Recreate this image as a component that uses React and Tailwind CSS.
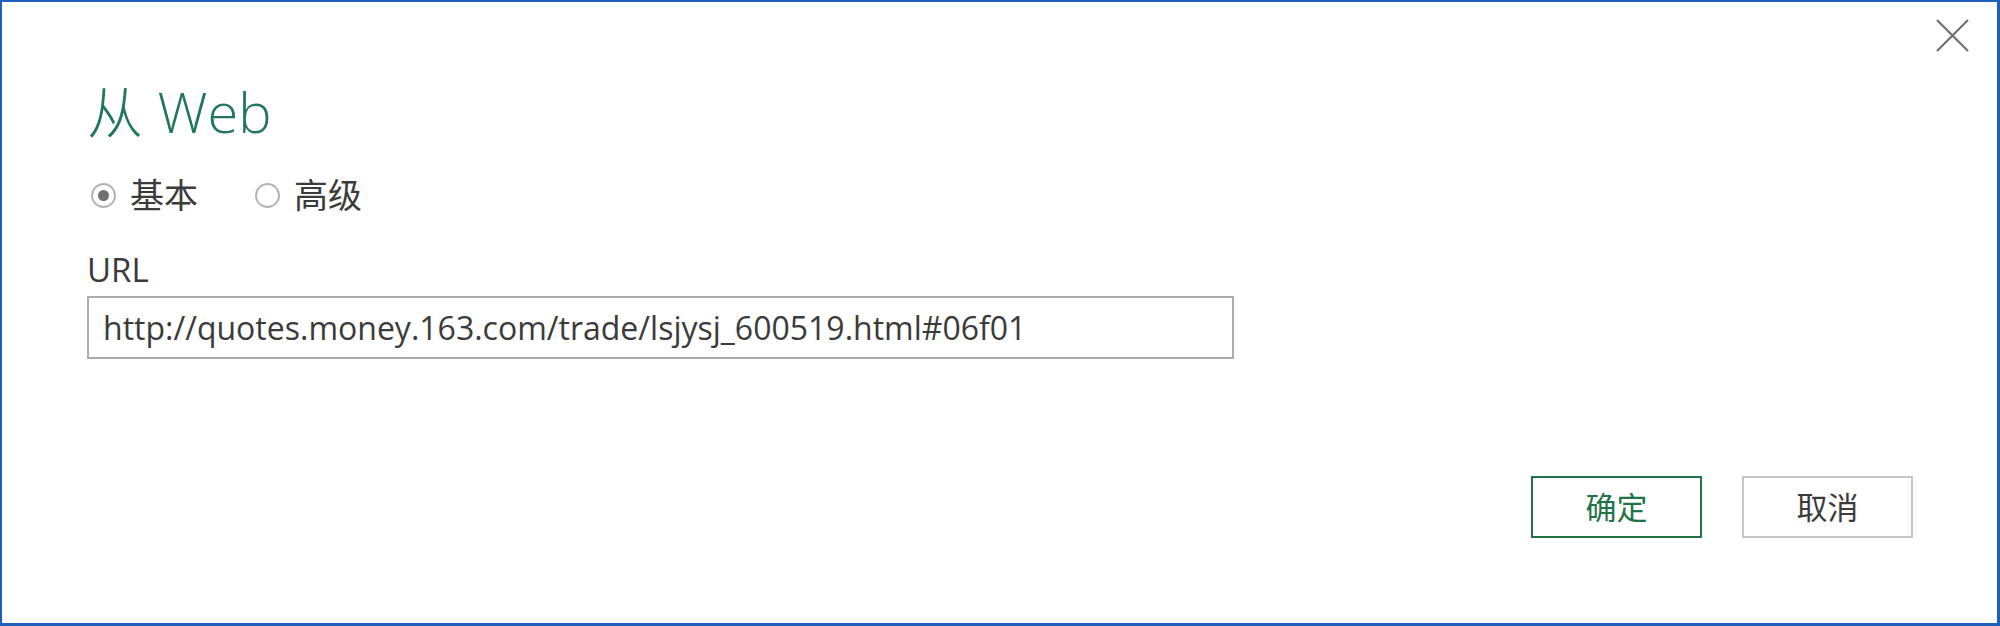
const font = {
  fontFamily: '"Open Sans", "Noto Sans CJK SC", sans-serif',
};

const Radio = ({ checked, label }) => (
  <label className="flex items-center gap-[14px] text-[34px] text-[#3b3b3b]">
    <span className="w-[25px] h-[25px] rounded-full border-2 border-[#b4b4b4] flex items-center justify-center">
      {checked && <span className="w-[11px] h-[11px] rounded-full bg-[#707070]" />}
    </span>
    {label}
  </label>
);

export default function App() {
  return (
    <div
      className="w-[2000px] h-[626px] bg-white border-[#1d5fb9] border-t-2 border-l-2 border-r-[3px] border-b-[3px] relative"
      style={font}
    >
      {/* close */}
      <button className="absolute top-[17px] right-[28px]">
        <svg width="33" height="33" viewBox="0 0 33 33" stroke="#707070" strokeWidth="2.2" fill="none">
          <path d="M1 1 L32 32 M32 1 L1 32" />
        </svg>
      </button>

      <div className="pl-[85px] pr-[84px] flex flex-col">
        <h1 className="mt-[81px] text-[56px] leading-none font-light text-[#21775a]">从 Web</h1>

        <div className="mt-[36px] ml-[4px] h-[40px] flex items-center gap-[57px]">
          <Radio checked label="基本" />
          <Radio label="高级" />
        </div>

        <div className="mt-[38px] text-[33px] leading-none text-[#3b3b3b]">URL</div>

        <div className="mt-[10px] w-[1147px] h-[63px] border-2 border-[#ababab] flex items-center pl-[14px] text-[32px] text-[#3b3b3b]">
          http://quotes.money.163.com/trade/lsjysj_600519.html#06f01
        </div>

        <div className="mt-[117px] flex justify-end gap-[40px]">
          <button className="w-[171px] h-[62px] border-2 border-[#217346] text-[31px] text-[#217346]">
            确定
          </button>
          <button className="w-[171px] h-[62px] border-2 border-[#c6c6c6] text-[31px] text-[#3b3b3b]">
            取消
          </button>
        </div>
      </div>
    </div>
  );
}
